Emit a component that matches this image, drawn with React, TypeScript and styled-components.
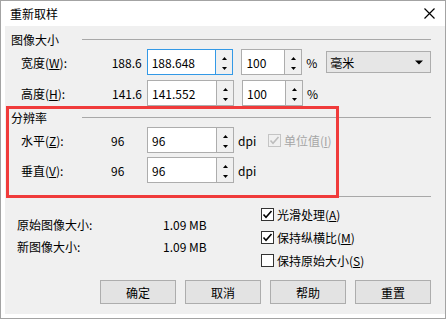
import styled, { createGlobalStyle } from "styled-components";

const GlobalStyle = createGlobalStyle`
  * { box-sizing: border-box; margin: 0; padding: 0; }
  body {
    background: #ffffff;
    font-family: "Noto Sans CJK SC", "Noto Sans", sans-serif;
    font-size: 12px;
    color: #000;
  }
`;

// window frame
const Window = styled.div`
  position: relative;
  width: 446px;
  height: 319px;
  border: 1px solid #a3a3a3;
  background: #fff;
  display: flex;
  flex-direction: column;
  padding: 0 0 4px 4px;
`;

const TitleBar = styled.div`
  height: 25px;
  display: flex;
  align-items: center;
  justify-content: space-between;
  padding: 0 10px 0 5px;
`;

const Title = styled.span`
  font-size: 12px;
`;

const Body = styled.div`
  flex: 1;
  background: #f0f0f0;
  padding: 6px 14px 0 6px;
  display: flex;
  flex-direction: column;
`;

const GroupHeader = styled.div<{ $mt?: number }>`
  height: 14px;
  display: flex;
  align-items: center;
  margin-top: ${(p) => p.$mt ?? 0}px;
  margin-bottom: 3px;
`;

const GroupLabel = styled.span`
  width: 71px;
`;

const Rule = styled.div`
  flex: 1;
  height: 1px;
  background: #a8a8a8;
`;

const Rows = styled.div<{ $gap: number }>`
  display: flex;
  flex-direction: column;
  gap: ${(p) => p.$gap}px;
`;

const Row = styled.div`
  height: 26px;
  display: flex;
  align-items: center;
  padding-left: 10px;
`;

const Label = styled.span`
  width: 80px;
  white-space: nowrap;
`;

const Value = styled.span<{ $left?: boolean }>`
  width: 41px;
  text-align: ${(p) => (p.$left ? "left" : "right")};
  padding-left: ${(p) => (p.$left ? 10 : 0)}px;
  margin-right: 5px;
`;

const SpinBox = styled.div<{ $w: number; $focus?: boolean; $ml?: number }>`
  width: ${(p) => p.$w}px;
  height: 26px;
  display: flex;
  border: 1px solid ${(p) => (p.$focus ? "#3399e6" : "#adadad")};
  background: #fff;
  margin-left: ${(p) => p.$ml ?? 0}px;
`;

const SpinText = styled.span`
  flex: 1;
  display: flex;
  align-items: center;
  padding-left: 4px;
`;

const SpinButtons = styled.div<{ $focus?: boolean }>`
  width: 17px;
  border-left: 1px solid ${(p) => (p.$focus ? "#3399e6" : "#adadad")};
  background: #f0f0f0;
  display: flex;
  align-items: center;
  justify-content: center;
`;

const Unit = styled.span<{ $w: number }>`
  width: ${(p) => p.$w}px;
  margin-left: 4px;
`;

const Dropdown = styled.div`
  width: 105px;
  height: 22px;
  margin-left: 4px;
  border: 1px solid #adadad;
  background: #e6e6e6;
  display: flex;
  align-items: center;
  justify-content: space-between;
  padding: 0 7px 0 3px;
`;

const CheckRow = styled.label<{ $disabled?: boolean; $ml?: number }>`
  display: flex;
  align-items: center;
  gap: 3px;
  height: 22px;
  margin-left: ${(p) => p.$ml ?? 0}px;
  color: ${(p) => (p.$disabled ? "#a6a6a6" : "#000")};
  white-space: nowrap;
`;

const Box = styled.span<{ $disabled?: boolean }>`
  width: 13px;
  height: 13px;
  border: 1px solid ${(p) => (p.$disabled ? "#c4c4c4" : "#333")};
  background: ${(p) => (p.$disabled ? "transparent" : "#fff")};
  display: flex;
  align-items: center;
  justify-content: center;
`;

const Separator = styled.div`
  height: 1px;
  background: #a8a8a8;
  margin-top: 13px;
`;

const Bottom = styled.div`
  display: flex;
`;

const InfoColumn = styled.div`
  width: 250px;
  padding: 16px 0 0 6px;
  display: flex;
  flex-direction: column;
`;

const InfoRow = styled.div`
  height: 22px;
  display: flex;
  align-items: center;
`;

const InfoLabel = styled.span`
  width: 146px;
`;

const OptionColumn = styled.div`
  padding-top: 6px;
  display: flex;
  flex-direction: column;
  gap: 1px;
`;

const Buttons = styled.div`
  display: flex;
  justify-content: flex-end;
  gap: 9px;
  margin-top: 9px;
`;

const Button = styled.button`
  width: 76px;
  height: 24px;
  border: 1px solid #adadad;
  background: #e3e3e3;
  font: inherit;
  color: #000;
`;

// annotation frame drawn over the resolution group
const Highlight = styled.div`
  position: absolute;
  left: 5px;
  top: 105px;
  width: 333px;
  height: 92px;
  border: 3px solid #f03b3b;
  pointer-events: none;
`;

function Arrows() {
  return (
    <svg width="9" height="24" viewBox="0 0 9 24">
      <polygon points="2,10 7,10 4.5,7" fill="#000" />
      <polygon points="2,17 7,17 4.5,20" fill="#000" />
    </svg>
  );
}

function Spin({ value, w, focus, ml }: { value: string; w: number; focus?: boolean; ml?: number }) {
  return (
    <SpinBox $w={w} $focus={focus} $ml={ml}>
      <SpinText>{value}</SpinText>
      <SpinButtons $focus={focus}>
        <Arrows />
      </SpinButtons>
    </SpinBox>
  );
}

function Check({ checked, disabled, children, ml }: { checked: boolean; disabled?: boolean; children: React.ReactNode; ml?: number }) {
  return (
    <CheckRow $disabled={disabled} $ml={ml}>
      <Box $disabled={disabled}>
        {checked && (
          <svg width="11" height="11" viewBox="0 0 11 11">
            <path d="M1.5 5.5 L4 8.2 L9.5 2" fill="none" stroke={disabled ? "#bdbdbd" : "#000"} strokeWidth="1.6" />
          </svg>
        )}
      </Box>
      <span>{children}</span>
    </CheckRow>
  );
}

export default function App() {
  return (
    <>
      <GlobalStyle />
      <Window>
        <TitleBar>
          <Title>重新取样</Title>
          <svg width="11" height="11" viewBox="0 0 11 11">
            <path d="M0.5 0.5 L10.5 10.5 M10.5 0.5 L0.5 10.5" stroke="#000" strokeWidth="1.2" />
          </svg>
        </TitleBar>
        <Body>
          <GroupHeader>
            <GroupLabel>图像大小</GroupLabel>
            <Rule />
          </GroupHeader>
          <Rows $gap={5}>
            <Row>
              <Label>宽度(<u>W</u>):</Label>
              <Value>188.6</Value>
              <Spin value="188.648" w={87} focus />
              <Spin value="100" w={61} ml={8} />
              <Unit $w={16}>%</Unit>
              <Dropdown>
                <span>毫米</span>
                <svg width="8" height="5" viewBox="0 0 8 5">
                  <polygon points="0,0.5 8,0.5 4,4.5" fill="#000" />
                </svg>
              </Dropdown>
            </Row>
            <Row>
              <Label>高度(<u>H</u>):</Label>
              <Value>141.6</Value>
              <Spin value="141.552" w={87} />
              <Spin value="100" w={61} ml={8} />
              <Unit $w={16}>%</Unit>
            </Row>
          </Rows>

          <GroupHeader $mt={4}>
            <GroupLabel>分辨率</GroupLabel>
            <Rule />
          </GroupHeader>
          <Rows $gap={4}>
            <Row>
              <Label>水平(<u>Z</u>):</Label>
              <Value $left>96</Value>
              <Spin value="96" w={87} />
              <Unit $w={16}>dpi</Unit>
              <Check checked disabled ml={14}>
                单位值(<u>I</u>)
              </Check>
            </Row>
            <Row>
              <Label>垂直(<u>V</u>):</Label>
              <Value $left>96</Value>
              <Spin value="96" w={87} />
              <Unit $w={16}>dpi</Unit>
            </Row>
          </Rows>

          <Separator />

          <Bottom>
            <InfoColumn>
              <InfoRow>
                <InfoLabel>原始图像大小:</InfoLabel>
                <span>1.09 MB</span>
              </InfoRow>
              <InfoRow>
                <InfoLabel>新图像大小:</InfoLabel>
                <span>1.09 MB</span>
              </InfoRow>
            </InfoColumn>
            <OptionColumn>
              <Check checked>光滑处理(<u>A</u>)</Check>
              <Check checked>保持纵横比(<u>M</u>)</Check>
              <Check checked={false}>保持原始大小(<u>S</u>)</Check>
            </OptionColumn>
          </Bottom>

          <Buttons>
            <Button>确定</Button>
            <Button>取消</Button>
            <Button>帮助</Button>
            <Button>重置</Button>
          </Buttons>
        </Body>
        <Highlight />
      </Window>
    </>
  );
}
